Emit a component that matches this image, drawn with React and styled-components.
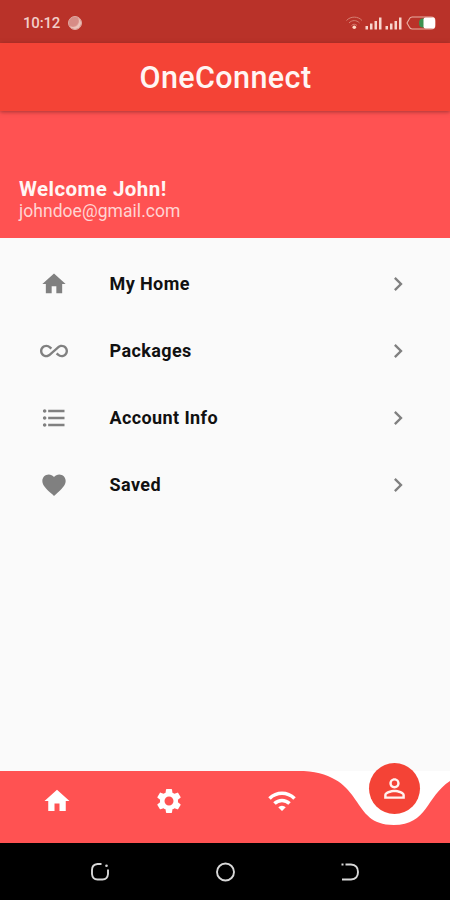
import React from "react"
import styled, { createGlobalStyle } from "styled-components"
import {
  MdAllInclusive,
  MdChevronRight,
  MdFavorite,
  MdFormatListBulleted,
  MdHome,
  MdPersonOutline,
  MdSettings,
  MdWifi,
} from "react-icons/md"

const GlobalStyle = createGlobalStyle`
  *, *::before, *::after {
    box-sizing: border-box;
  }

  body {
    margin: 0;
    background: #fafafa;
    font-family: Roboto, "Noto Sans", sans-serif;
  }

  svg {
    display: block;
    flex-shrink: 0;
  }
`

const Screen = styled.div`
  display: flex;
  flex-direction: column;
  width: 450px;
  height: 900px;
  overflow: hidden;
  background: #fafafa;
`

const StatusBar = styled.div`
  display: flex;
  align-items: center;
  justify-content: space-between;
  height: 43px;
  padding: 2px 14px 0 23px;
  background: #b93229;
`

const Clock = styled.div`
  display: flex;
  align-items: center;
  gap: 8px;
  font-size: 15px;
  font-weight: 500;
  line-height: 18px;
  letter-spacing: -0.2px;
  color: #f2cdc8;
`

const Dot = styled.span`
  width: 14px;
  height: 14px;
  border: 1px solid #e0aaa3;
  border-radius: 50%;
  background: #d78c86;
  box-shadow: inset -2px -2px 1px #edc5bc;
`

const AppBar = styled.header`
  display: flex;
  align-items: center;
  justify-content: center;
  position: relative;
  height: 68px;
  padding: 2px 0 0 1px;
  background: #f44336;
  box-shadow: 0 1px 4px rgba(90, 30, 30, 0.55);
`

const AppTitle = styled.h1`
  margin: 0;
  font-size: 30.5px;
  font-weight: 500;
  line-height: 36px;
  letter-spacing: 0.4px;
  color: #fff5f3;
`

const Profile = styled.section`
  display: flex;
  flex-direction: column;
  justify-content: flex-end;
  height: 127px;
  padding: 0 19px 16px;
  background: #ff5252;
`

const Welcome = styled.h2`
  margin: 0;
  font-size: 20.5px;
  font-weight: 700;
  line-height: 23px;
  letter-spacing: 0.45px;
  color: #fff6f4;
`

const Email = styled.p`
  margin: 0;
  font-size: 17.5px;
  line-height: 21px;
  letter-spacing: 0.05px;
  color: #ffd4d2;
`

const Menu = styled.nav`
  display: flex;
  flex: 1;
  flex-direction: column;
  padding-top: 12px;
`

const MenuRow = styled.a`
  display: grid;
  grid-template-columns: 28px 1fr 28px;
  align-items: center;
  column-gap: 42px;
  height: 67.15px;
  padding: 0 38px 0 39.5px;
  color: #808080;
`

const MenuLabel = styled.span`
  font-size: 18px;
  font-weight: 700;
  line-height: 24px;
  letter-spacing: 0.4px;
  color: #111;
`

const Chevron = styled(MdChevronRight)`
  margin-top: 1px;
`

const TabBar = styled.nav`
  position: relative;
  height: 72px;
  background: #fff;
`

const TabBackground = styled.svg`
  position: absolute;
  inset: 0;
`

const Tabs = styled.div`
  display: grid;
  grid-template-columns: repeat(4, 112.5px);
  justify-items: center;
  position: relative;
  height: 100%;
  padding: 15px 0 0 0.6px;
  color: #fff;
`

const ActiveTab = styled.span`
  display: flex;
  align-items: center;
  justify-content: center;
  width: 51px;
  height: 51px;
  margin-top: -23px;
  border-radius: 50%;
  background: #f44336;
  color: #fff2ef;
`

const SystemBar = styled.div`
  display: flex;
  align-items: center;
  justify-content: center;
  gap: 101px;
  height: 57px;
  background: #000;
`

const MENU = [
  { label: "My Home", Icon: MdHome },
  { label: "Packages", Icon: MdAllInclusive },
  { label: "Account Info", Icon: MdFormatListBulleted },
  { label: "Saved", Icon: MdFavorite },
]

const StatusIcons = () => (
  <svg width="92" height="18" viewBox="0 0 92 18" fill="none">
    <g stroke="#d67f72" strokeWidth="1">
      <path d="M2.500 6.500C6.500 2 14 2 18 6.500" />
      <path d="M5 9C8 5.800 12.500 5.800 15.500 9" />
      <path d="M7.500 11.500C9 9.800 11.500 9.800 13 11.500" />
    </g>
    <circle cx="10.300" cy="13.300" r="1.800" fill="#ffd9c4" />
    <g fill="#f8d4cc">
      <path d="M21.500 12h2.500v3.500h-2.500zM26 9.500h2.500v6H26zM30.500 7h2.500v8.500h-2.500zM35 3.500h2.500v12H35z" />
      <path d="M41.500 12h2.500v3.500h-2.500zM46 9.500h2.500v6H46zM50.500 7h2.500v8.500h-2.500zM55 3.500h2.500v12H55z" />
    </g>
    <path
      d="M68 3H87Q91 3 91 7V11Q91 15 87 15H68Q66 15 65 12.500L63 9L65 5.500Q66 3 68 3Z"
      stroke="#eaaea3"
      strokeWidth="1.100"
    />
    <path d="M80 4.500H78Q75 5 75 9T78 13.500H80Z" fill="#3c9150" />
    <rect x="79.500" y="3.500" width="11.500" height="11" rx="2" fill="#fff" />
  </svg>
)

const App = () => (
  <>
    <GlobalStyle />
    <Screen>
      <StatusBar>
        <Clock>
          10:12
          <Dot />
        </Clock>
        <StatusIcons />
      </StatusBar>
      <AppBar>
        <AppTitle>OneConnect</AppTitle>
      </AppBar>
      <Profile>
        <Welcome>Welcome John!</Welcome>
        <Email>johndoe@gmail.com</Email>
      </Profile>
      <Menu>
        {MENU.map(({ label, Icon }) => (
          <MenuRow key={label}>
            <Icon size={28} />
            <MenuLabel>{label}</MenuLabel>
            <Chevron size={28} />
          </MenuRow>
        ))}
      </Menu>
      <TabBar>
        <TabBackground width="450" height="72" viewBox="0 0 450 72">
          <path
            d="M0 0H303.750C366.750 4.500 348.750 54 393.750 54C438.750 54 420.750 4.500 483.750 0V72H0Z"
            fill="#ff5252"
          />
        </TabBackground>
        <Tabs>
          <MdHome size={30} />
          <MdSettings size={30} />
          <MdWifi size={30} />
          <ActiveTab>
            <MdPersonOutline size={31} />
          </ActiveTab>
        </Tabs>
      </TabBar>
      <SystemBar>
        <svg width="24" height="24" fill="none" stroke="#d8d8d8" strokeWidth="1.900">
          <path d="M13.500 4H9.500Q4 4.500 4 10V14Q4.500 19.500 9.500 19.500H14.500Q19.500 19.500 20 14V9.500" />
          <circle cx="18.500" cy="5.800" r="1.300" fill="#d8d8d8" stroke="none" />
        </svg>
        <svg width="24" height="24" fill="none" stroke="#d8d8d8" strokeWidth="1.900">
          <circle cx="12.500" cy="12" r="8.500" />
        </svg>
        <svg width="24" height="24" fill="none" stroke="#d8d8d8" strokeWidth="1.900">
          <path d="M7.500 4.500H13Q20 5 20 12T13 19.500H4M3.500 4.500H5.500" />
        </svg>
      </SystemBar>
    </Screen>
  </>
)

export default App
